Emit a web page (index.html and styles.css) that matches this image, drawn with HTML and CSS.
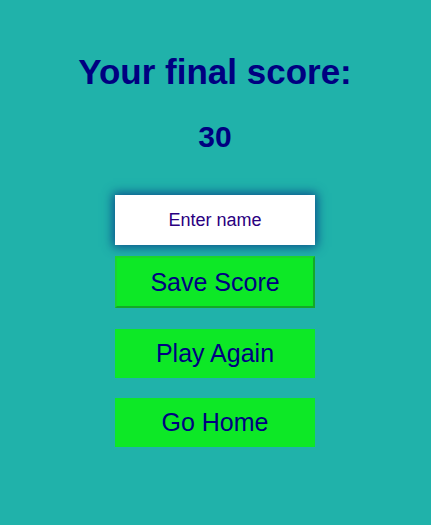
FILE: index.html
```html
<!DOCTYPE html>
<html>
<head>
<meta charset="utf-8">
<link rel="stylesheet" href="styles.css">
</head>
<body>
<main class="end">
  <h1 class="title">Your final score:</h1>
  <h2 class="score">30</h2>
  <form class="form">
    <input class="name" type="text" placeholder="Enter name">
    <button type="button" class="btn btn-save">Save Score</button>
  </form>
  <a class="btn btn-link">Play Again</a>
  <a class="btn btn-link">Go Home</a>
</main>
</body>
</html>
```
FILE: styles.css
```css
html, body {
  margin: 0;
  padding: 0;
  height: 100%;
}
body {
  background: #20b2aa;
  font-family: "Liberation Sans", Arial, sans-serif;
  color: #000080;
}
.end {
  width: 430px;
  display: flex;
  flex-direction: column;
  align-items: center;
  padding-top: 51px;
}
.title {
  margin: 0;
  font-size: 35px;
  line-height: 42px;
  font-weight: bold;
}
.score {
  margin: 26px 0 0;
  font-size: 30px;
  line-height: 36px;
  font-weight: bold;
}
.form {
  display: flex;
  flex-direction: column;
  align-items: center;
  margin-top: 40px;
}
.name {
  box-sizing: border-box;
  width: 200px;
  height: 50px;
  border: none;
  outline: none;
  background: #fff;
  text-align: center;
  font-family: "Liberation Sans", Arial, sans-serif;
  font-size: 18px;
  color: #000080;
  box-shadow: 0 0 10px 2px #0b4e8c;
}
.name::placeholder {
  color: #2a0080;
  opacity: 1;
}
.btn {
  box-sizing: border-box;
  display: flex;
  align-items: center;
  justify-content: center;
  width: 200px;
  height: 49px;
  background: #0de826;
  color: #000080;
  font-family: "Liberation Sans", Arial, sans-serif;
  font-size: 25px;
  text-decoration: none;
  margin-bottom: 20px;
}
.btn-save {
  height: 52px;
  margin-top: 11px;
  margin-bottom: 21px;
  border: 2px solid;
  border-color: #1cd42c #14a827 #14a827 #1cd42c;
  padding: 0;
}
```
